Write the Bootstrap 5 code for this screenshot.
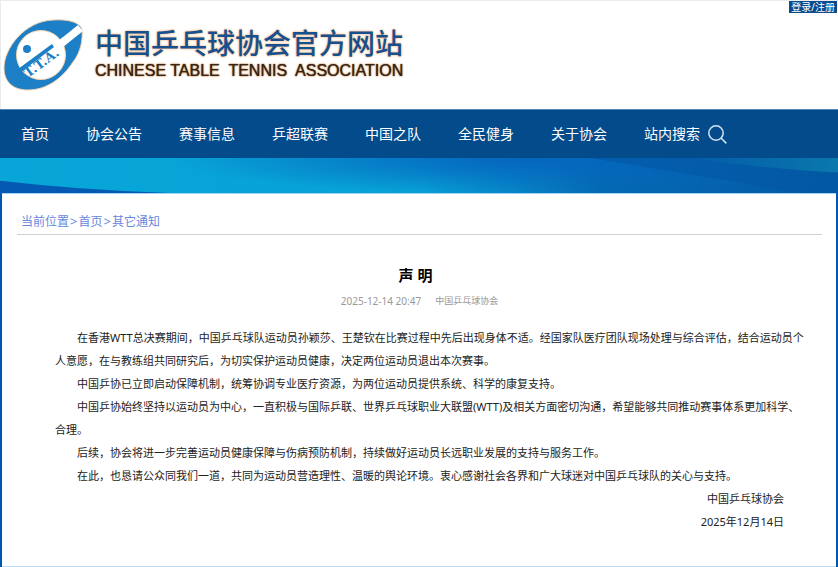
<!DOCTYPE html>
<html lang="zh-CN">
<head>
<meta charset="utf-8">
<meta name="viewport" content="width=device-width, initial-scale=1">
<title>中国乒乓球协会官方网站</title>
<link href="https://cdn.jsdelivr.net/npm/bootstrap@5.3.0/dist/css/bootstrap.min.css" rel="stylesheet">
<style>
body{font-family:"Noto Sans","Noto Sans CJK SC",sans-serif;font-size:11px;line-height:23px;color:#222;background:#0057ae}
.masthead{min-height:109px;border-top:1px solid #e9ecef;border-left:1px solid #e9ecef}
.brand{gap:12px;padding:18px 0 0 2px}
.brand-cn{font-size:28px;line-height:40px;font-weight:500;color:#17508f;text-shadow:0 0 2px #f2b277,0 0 3px #f8d5b4}
.brand-en{font-family:"Liberation Sans",Arial,sans-serif;font-size:16px;line-height:16px;white-space:pre;color:#3b2413;text-shadow:0 0 1px #3b2413,0 0 2px #f2b277,0 0 3px #f8d5b4}
.login-link{font-size:10px;line-height:12px;background:#0b4c8c;padding:0 2px;margin-right:1px}
.site-nav{background:#034b8b;border-top:1px solid #4f83b3;min-height:49px;padding:0 21px;column-gap:37px;font-size:14px;line-height:24px}
.banner{height:35px}
.panel{margin:0 2px;border-top:1px solid #9fd4f5;border-bottom:1px solid #b9dcf5;padding:15px 14px 16px 15px;min-height:calc(100vh - 193px)}
.crumbs{font-size:12px;line-height:24px;padding:0 4px;border-bottom:1px solid #cfcfd2;color:#6688dd}
.crumbs a{color:inherit}
.crumb-sep{padding:0 1px;font-size:13px}
.headline{font-size:15px;line-height:20px;margin:30px 0 0;padding-right:4px}
.meta-line{line-height:16px;margin-top:8px;gap:14px;color:#999}
.meta-line time{font-size:10px}
.meta-line span{font-size:9px}
.story{padding:17px 14px 0 38px}
.story p{margin:0;text-indent:2em}
.signature{padding-right:24px}
</style>
</head>
<body>
<header class="masthead bg-white d-flex justify-content-between align-items-start">
  <div class="brand d-flex">
    <svg width="80" height="72" viewBox="0 0 80 72" role="img" aria-label="CTTA">
      <path fill="#1d80c6" stroke="#f6d3ae" d="M1 49C1 29 22 2 50 1C65 0 76 3 79 10C80 20 78 33 70 43C59 60 43 71 25 71C9 71 1 62 1 49Z"/>
      <path fill="#fff" d="M54 23L75 6L80 12L60 28Z"/>
      <circle cx="38" cy="36" r="24.500" fill="#fff" stroke="#f6d3ae"/>
      <path fill="#fff" d="M52 25L60 18L65 23L58 30Z"/>
      <circle cx="24" cy="30" r="4" fill="#1d80c6"/>
      <path fill="#1d80c6" d="M15 50L49 25L51 28L18 53Z"/>
      <text transform="translate(25 59) rotate(-36)" font-family="DejaVu Serif, serif" font-size="13" font-weight="700" fill="#1d80c6">T.T.A.</text>
    </svg>
    <div>
      <div class="brand-cn mt-1">中国乒乓球协会官方网站</div>
      <div class="brand-en">CHINESE TABLE  TENNIS  ASSOCIATION</div>
    </div>
  </div>
  <a class="login-link text-white text-decoration-none" href="#">登录/注册</a>
</header>
<nav class="site-nav d-flex flex-wrap align-items-center" aria-label="主导航">
  <a class="text-white text-decoration-none" href="#">首页</a>
  <a class="text-white text-decoration-none" href="#">协会公告</a>
  <a class="text-white text-decoration-none" href="#">赛事信息</a>
  <a class="text-white text-decoration-none" href="#">乒超联赛</a>
  <a class="text-white text-decoration-none" href="#">中国之队</a>
  <a class="text-white text-decoration-none" href="#">全民健身</a>
  <a class="text-white text-decoration-none" href="#">关于协会</a>
  <a class="text-white text-decoration-none d-flex align-items-center gap-2" href="#">站内搜索
    <svg width="19" height="19" viewBox="0 0 19 19" fill="none" stroke="#d5e4f1" stroke-width="1.5" aria-hidden="true"><circle cx="8" cy="8" r="7.2"/><path d="M13 13L18.4 18.4"/></svg></a>
</nav>
<svg class="banner d-block w-100" viewBox="0 0 838 34" preserveAspectRatio="none" aria-hidden="true">
  <defs>
    <linearGradient id="sea"><stop offset="0" stop-color="#08a6d8"/><stop offset=".5" stop-color="#07a2d6"/><stop offset=".6" stop-color="#078bcb"/><stop offset=".72" stop-color="#0469b2"/><stop offset="1" stop-color="#0459a4"/></linearGradient>
    <radialGradient id="shade" gradientUnits="userSpaceOnUse" cx="0" cy="0" r="1" gradientTransform="translate(530 0) scale(360 36)"><stop offset="0" stop-color="#0566be"/><stop offset=".4" stop-color="#0566be" stop-opacity=".65"/><stop offset="1" stop-color="#0566be" stop-opacity="0"/></radialGradient>
    <linearGradient id="teal"><stop offset="0" stop-color="#0a7ab0" stop-opacity="0"/><stop offset="1" stop-color="#0a78ad"/></linearGradient>
  </defs>
  <path fill="url(#sea)" d="M0 0H838V34H0Z"/>
  <path fill="url(#shade)" d="M0 0H838V34H0Z"/>
  <path fill="#0356a2" opacity=".6" d="M590 0L838 0V34H800Z"/>
  <path fill="url(#teal)" d="M690 0H838V14Q770 11 690 0Z"/>
  <path fill="#0459b2" d="M0 22Q80 31 170 34H0Z"/>
</svg>
<main class="panel bg-white">
  <nav class="crumbs" aria-label="当前位置">当前位置<span class="crumb-sep">&gt;</span><a class="text-decoration-none" href="#">首页</a><span class="crumb-sep">&gt;</span><a class="text-decoration-none" href="#">其它通知</a></nav>
  <article>
    <h1 class="headline text-center fw-bold text-black">声 明&nbsp;</h1>
    <div class="meta-line d-flex justify-content-center"><time datetime="2025-12-14T20:47">2025-12-14 20:47</time><span>中国乒乓球协会</span></div>
    <div class="story">
      <p>在香港WTT总决赛期间，中国乒乓球队运动员孙颖莎、王楚钦在比赛过程中先后出现身体不适。经国家队医疗团队现场处理与综合评估，结合运动员个人意愿，在与教练组共同研究后，为切实保护运动员健康，决定两位运动员退出本次赛事。</p>
      <p>中国乒协已立即启动保障机制，统筹协调专业医疗资源，为两位运动员提供系统、科学的康复支持。</p>
      <p>中国乒协始终坚持以运动员为中心，一直积极与国际乒联、世界乒乓球职业大联盟(WTT)及相关方面密切沟通，希望能够共同推动赛事体系更加科学、<span class="text-nowrap">合理。</span></p>
      <p>后续，协会将进一步完善运动员健康保障与伤病预防机制，持续做好运动员长远职业发展的支持与服务工作。</p>
      <p>在此，也恳请公众同我们一道，共同为运动员营造理性、温暖的舆论环境。衷心感谢社会各界和广大球迷对中国乒乓球队的关心与支持。</p>
      <div class="signature text-end">中国乒乓球协会<br>2025年12月14日</div>
    </div>
  </article>
</main>
<script src="https://cdn.jsdelivr.net/npm/bootstrap@5.3.0/dist/js/bootstrap.bundle.min.js"></script>
</body>
</html>
